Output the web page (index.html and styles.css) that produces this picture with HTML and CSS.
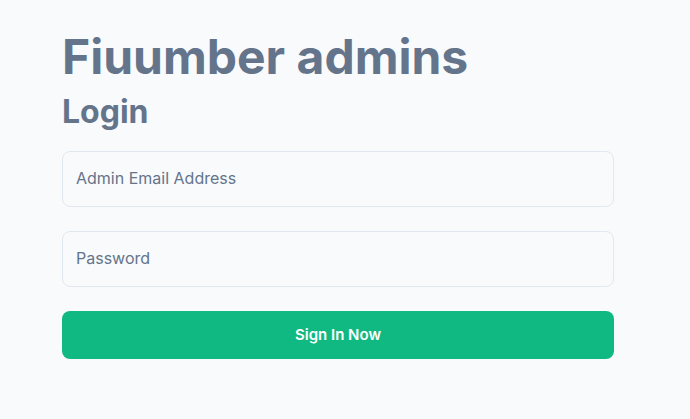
FILE: index.html
```html
<!DOCTYPE html>
<html lang="en">
<head>
<meta charset="utf-8">
<title>Fiuumber admins</title>
<link rel="stylesheet" href="styles.css">
</head>
<body>
<main class="page">
  <h1 class="title">Fiuumber admins</h1>
  <h2 class="subtitle">Login</h2>
  <form class="form">
    <input class="field" type="email" placeholder="Admin Email Address">
    <input class="field" type="password" placeholder="Password">
    <button class="submit" type="button">Sign In Now</button>
  </form>
</main>
</body>
</html>
```

FILE: styles.css
```css
html, body {
  margin: 0;
  padding: 0;
  background: #f8fafc;
  font-family: Inter, "Noto Sans", sans-serif;
  color: #64748b;
}
.page {
  padding: 33px 0 0 62px;
  width: 552px;
}
.title {
  margin: 0 0 11px;
  font-size: 48px;
  line-height: 48px;
  font-weight: 700;
  color: #64748b;
}
.subtitle {
  margin: 0;
  font-size: 32px;
  line-height: 40px;
  font-weight: 700;
  color: #64748b;
}
.form {
  margin-top: 19px;
  display: flex;
  flex-direction: column;
}
.field {
  box-sizing: border-box;
  height: 56px;
  width: 100%;
  margin-bottom: 24px;
  padding: 0 13px 2px;
  border: 1px solid #e2e8f0;
  border-radius: 8px;
  background: #f8fafc;
  font-family: Inter, "Noto Sans", sans-serif;
  font-size: 16px;
  color: #334155;
  outline: none;
}
.field::placeholder {
  color: #64748b;
}
.submit {
  height: 48px;
  width: 100%;
  padding: 0 0 2px;
  border: 0;
  border-radius: 8px;
  background: #10b981;
  color: #ffffff;
  font-family: Inter, "Noto Sans", sans-serif;
  font-size: 15px;
  font-weight: 600;
}
```
